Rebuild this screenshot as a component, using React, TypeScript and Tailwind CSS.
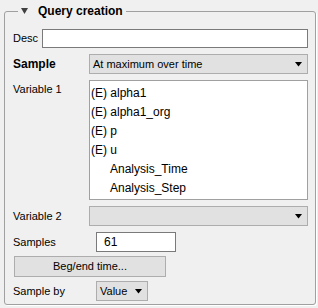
const Arrow = () => (
  <svg width="7" height="5" viewBox="0 0 7 5" className="shrink-0">
    <polygon points="0,0 7,0 3.5,4.5" fill="#000" />
  </svg>
);

const Combo = ({ text, className }: { text?: string; className: string }) => (
  <div
    className={`flex items-center justify-between border border-[#adadad] bg-[#e1e1e1] pl-[3px] pr-[5px] text-[11px] text-black ${className}`}
  >
    <span>{text}</span>
    <Arrow />
  </div>
);

const variables = [
  { name: "(E) alpha1", indent: false },
  { name: "(E) alpha1_org", indent: false },
  { name: "(E) p", indent: false },
  { name: "(E) u", indent: false },
  { name: "Analysis_Time", indent: true },
  { name: "Analysis_Step", indent: true },
];

export default function App() {
  return (
    <div
      className="h-[308px] w-[318px] bg-[#f0f0f0] pl-[4px] pt-[11px] text-[11px] text-black"
      style={{ fontFamily: '"Liberation Sans", Arial, sans-serif' }}
    >
      <div className="relative flex h-[294px] w-[312px] flex-col rounded-[3px] border border-[#a0a0a0] pl-[8px] pr-[7px] pt-[17px] shadow-[1px_1px_0_#ffffff]">
        {/* group title sits over the top border */}
        <div className="absolute left-[13px] top-[-9px] flex items-center gap-[10px] bg-[#f0f0f0] px-[3px]">
          <svg width="7" height="6" viewBox="0 0 7 6">
            <polygon points="0,0 7,0 3.5,6" fill="#404040" />
          </svg>
          <span className="text-[12px] font-bold leading-[16px]">Query creation</span>
        </div>

        <div className="flex h-[19px] items-center">
          <span className="w-[29px]">Desc</span>
          <div className="h-full flex-1 border border-[#7a7a7a] bg-white" />
        </div>

        <div className="mt-[6px] flex h-[20px] items-center">
          <span className="w-[76px] text-[12px] font-bold">Sample</span>
          <Combo text="At maximum over time" className="h-full flex-1" />
        </div>

        <div className="mt-[6px] flex h-[120px]">
          <span className="w-[76px] pt-[1px] leading-[16px]">Variable 1</span>
          <div className="flex-1 border border-[#a0a0a0] bg-white pt-[2px] text-[12px]">
            {variables.map((v) => (
              <div
                key={v.name}
                className={`flex h-[19px] items-center ${v.indent ? "pl-[20px]" : "pl-[1px]"}`}
              >
                {v.name}
              </div>
            ))}
          </div>
        </div>

        <div className="mt-[6px] flex h-[20px] items-center">
          <span className="w-[76px]">Variable 2</span>
          <Combo className="h-full flex-1" />
        </div>

        <div className="mt-[6px] flex h-[20px] items-center">
          <span className="w-[83px]">Samples</span>
          <div className="flex h-full w-[80px] items-center border border-[#7a7a7a] bg-white pl-[7px] text-[12px]">
            61
          </div>
        </div>

        <div className="mt-[4px] flex h-[21px]">
          <div className="ml-[1px] flex w-[152px] items-center justify-center border border-[#adadad] bg-[#e1e1e1]">
            Beg/end time...
          </div>
        </div>

        <div className="mt-[4px] flex h-[20px] items-center">
          <span className="w-[83px]">Sample by</span>
          <Combo text="Value" className="h-full w-[52px]" />
        </div>
      </div>
    </div>
  );
}
